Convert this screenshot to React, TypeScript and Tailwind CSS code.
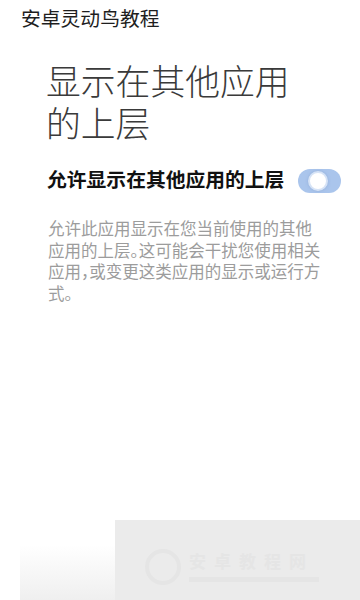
import React from 'react'

const cjk = "font-['Roboto','Noto_Sans_CJK_SC',sans-serif]"

function Toggle() {
  return (
    <div className="relative w-[43px] h-[24px] rounded-full bg-[#aac5ec] shrink-0">
      <div className="absolute left-[10px] top-[2px] w-[20px] h-[20px] rounded-full bg-white border-[2px] border-[#d6e3f6] shadow-[0_0_3px_rgba(120,150,200,0.5)]" />
    </div>
  )
}

export default function App() {
  return (
    <div className={`w-[360px] h-[600px] bg-white flex flex-col overflow-hidden ${cjk}`}>
      <div className="pl-[21px] pt-[7px] h-[38px] text-[19.8px] leading-[26px] text-[#1e1e1e]">
        安卓灵动鸟教程
      </div>

      <div className="pl-[46px] pt-[24px] text-[34.8px] leading-[42px] text-[#3a3a3a] font-light">
        <div className="whitespace-nowrap">显示在其他应用</div>
        <div>的上层</div>
      </div>

      <div className="flex items-center pl-[47px] pr-[19px] mt-[23px] justify-between">
        <span className="text-[19.8px] leading-[24px] font-bold text-[#111] whitespace-nowrap">
          允许显示在其他应用的上层
        </span>
        <Toggle />
      </div>

      <div className="pl-[48px] mt-[26px] text-[16.5px] leading-[21.6px] text-[#9c9c9c] [font-feature-settings:'halt']">
        <div className="whitespace-nowrap">允许此应用显示在您当前使用的其他</div>
        <div className="whitespace-nowrap">应用的上层。这可能会干扰您使用相关</div>
        <div className="whitespace-nowrap">应用，或变更这类应用的显示或运行方</div>
        <div className="whitespace-nowrap">式。</div>
      </div>

      <div className="flex-1" />

      <div className="flex items-end h-[80px]">
        <div className="w-[20px]" />
        <div className="w-[95px] h-[55px] bg-gradient-to-b from-white to-[#efefef]" />
        <div className="flex-1 h-[80px] bg-[#ebebeb] flex items-center pl-[30px] gap-[8px] pt-[14px]">
          <div className="w-[36px] h-[36px] rounded-full border-[4px] border-[#e5e5e5]" />
          <div className="flex flex-col gap-[6px]">
            <div className="text-[17px] leading-[18px] text-[#e5e5e5] font-bold tracking-[8px]">安卓教程网</div>
            <div className="w-[130px] h-[5px] bg-[#e5e5e5]" />
          </div>
        </div>
      </div>
    </div>
  )
}
